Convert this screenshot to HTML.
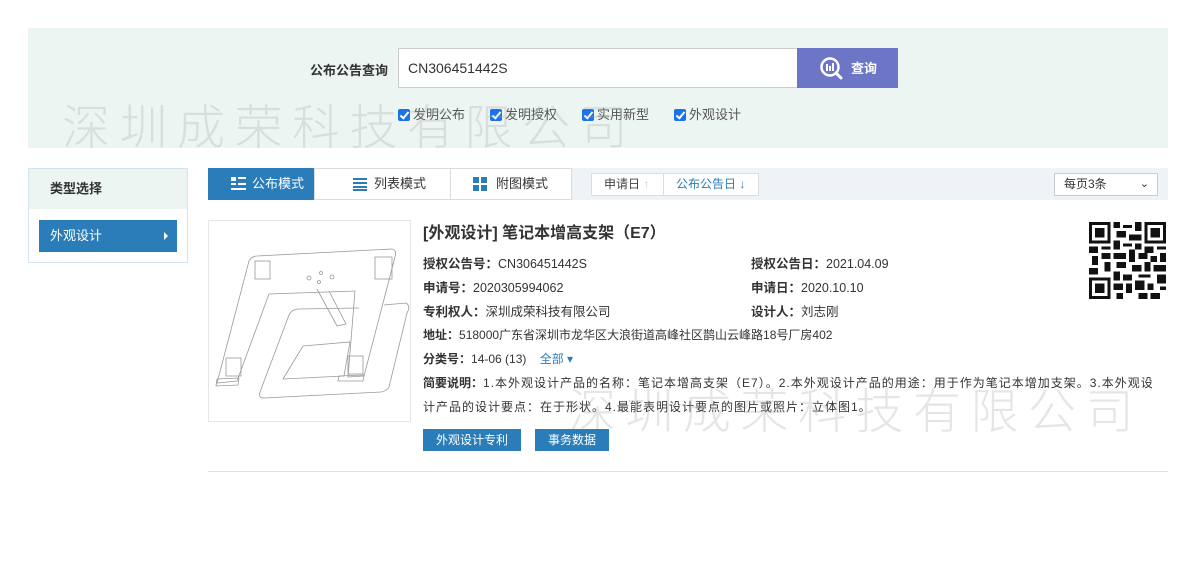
<!DOCTYPE html>
<html><head><meta charset="utf-8"><style>
*{margin:0;padding:0;box-sizing:border-box}
body{width:1198px;height:563px;background:#fff;font-family:"Liberation Sans","Noto Sans CJK SC",sans-serif;font-size:12px;color:#333;position:relative;overflow:hidden}
.abs{position:absolute}
.top{left:28px;top:28px;width:1140px;height:120px;background:#edf5f3}
.wm{font-size:48px;color:rgba(170,170,170,.3);white-space:nowrap;letter-spacing:9.5px;font-family:"Noto Sans CJK SC",sans-serif;font-weight:300}
.cb{display:inline-block;width:12px;height:12px;background:#1a73e8;border-radius:2px;vertical-align:-2px;margin-right:3px;position:relative}
.cb:after{content:"";position:absolute;left:4px;top:1px;width:3px;height:7px;border:solid #fff;border-width:0 2px 2px 0;transform:rotate(40deg)}
.chk{font-size:13px;color:#555;display:inline-block;width:92px}
.row{position:absolute;font-size:12.5px;color:#333;white-space:nowrap}
.row b{font-weight:bold}
.btn{position:absolute;background:#2a7db8;color:#fff;font-size:12px;text-align:center;line-height:22px;height:22px}
</style></head><body>
<div class="abs top"></div>
<div class="abs" style="left:300px;top:60px;width:88px;text-align:right;font-size:13px;font-weight:bold;color:#333">公布公告查询</div>
<div class="abs" style="left:398px;top:48px;width:400px;height:40px;background:#fff;border:1px solid #ccc;font-size:14px;line-height:38px;padding-left:9px;color:#333">CN306451442S</div>
<div class="abs" style="left:797px;top:48px;width:101px;height:40px;background:#6d75c6;color:#fff;font-size:13px;font-weight:bold;line-height:40px">
<svg class="abs" style="left:22px;top:8px" width="26" height="26" viewBox="0 0 26 26"><circle cx="11" cy="11" r="8.5" fill="none" stroke="#fff" stroke-width="2.5"/><path d="M17 17l5 5" stroke="#fff" stroke-width="3" stroke-linecap="round"/><path d="M8 8v7M11 10v5M14 7v8" stroke="#fff" stroke-width="2"/></svg>
<span class="abs" style="left:54px;top:1px">查询</span></div>
<div class="abs" style="left:398px;top:104px;white-space:nowrap"><span class="chk"><i class="cb"></i>发明公布</span><span class="chk"><i class="cb"></i>发明授权</span><span class="chk"><i class="cb"></i>实用新型</span><span class="chk"><i class="cb"></i>外观设计</span></div>
<div class="abs wm" style="left:62px;top:88px">深圳成荣科技有限公司</div>

<div class="abs" style="left:28px;top:168px;width:160px;height:95px;border:1px solid #d4e4ee;background:#fff"></div>
<div class="abs" style="left:29px;top:169px;width:158px;height:40px;background:#edf5f3;font-size:13px;font-weight:bold;line-height:40px;padding-left:21px;color:#333">类型选择</div>
<div class="abs" style="left:39px;top:220px;width:138px;height:32px;background:#2a7db8;color:#fff;font-size:13px;line-height:32px;padding-left:11px">外观设计<span class="abs" style="right:9px;top:12px;border-left:4px solid #fff;border-top:4px solid transparent;border-bottom:4px solid transparent"></span></div>

<div class="abs" style="left:208px;top:168px;width:960px;height:32px;background:#eef3f8"></div>
<div class="abs" style="left:208px;top:168px;width:106px;height:32px;background:#2a7db8;color:#fff;font-size:13px;line-height:32px;padding-left:44px">公布模式
<svg class="abs" style="left:23px;top:9px" width="15" height="14"><rect x="0" y="0" width="5" height="4" fill="#fff"/><rect x="7" y="0" width="8" height="2" fill="#fff"/><rect x="0" y="6" width="5" height="2" fill="#fff"/><rect x="7" y="6" width="8" height="2" fill="#fff"/><rect x="0" y="11" width="15" height="2" fill="#fff"/></svg></div>
<div class="abs" style="left:314px;top:168px;width:137px;height:32px;background:#fff;border:1px solid #dcdcdc;font-size:13px;line-height:30px;padding-left:59px;color:#333">列表模式
<svg class="abs" style="left:38px;top:9px" width="14" height="13"><rect y="0" width="14" height="2" fill="#2a7db8"/><rect y="4" width="14" height="2" fill="#2a7db8"/><rect y="8" width="14" height="2" fill="#2a7db8"/><rect y="11" width="14" height="2" fill="#2a7db8"/></svg></div>
<div class="abs" style="left:450px;top:168px;width:122px;height:32px;background:#fff;border:1px solid #dcdcdc;font-size:13px;line-height:30px;padding-left:45px;color:#333">附图模式
<svg class="abs" style="left:22px;top:8px" width="14" height="14"><rect width="6" height="6" fill="#2a7db8"/><rect x="8" width="6" height="6" fill="#2a7db8"/><rect y="8" width="6" height="6" fill="#2a7db8"/><rect x="8" y="8" width="6" height="6" fill="#2a7db8"/></svg></div>
<div class="abs" style="left:591px;top:173px;width:73px;height:23px;background:#fff;border:1px solid #ddd;font-size:12px;line-height:21px;padding-left:12px;color:#444">申请日 <span style="color:#ccc;font-weight:bold">↑</span></div>
<div class="abs" style="left:663px;top:173px;width:96px;height:23px;background:#fff;border:1px solid #ddd;font-size:12px;line-height:21px;padding-left:12px;color:#2a7db8">公布公告日 <span style="font-weight:bold">↓</span></div>
<div class="abs" style="left:1054px;top:173px;width:104px;height:23px;background:#fff;border:1px solid #ccc;font-size:12px;line-height:21px;padding-left:9px;color:#333">每页3条<span class="abs" style="right:8px;top:0;font-size:11px">&#8964;</span></div>

<div class="abs" style="left:208px;top:220px;width:203px;height:202px;border:1px solid #e6e6e6;background:#fff">
<svg width="201" height="200" viewBox="0 0 201 200" fill="none" stroke="#999" stroke-width="0.8">
<path d="M48 35L183 28Q188 29 186 36L155 155L139 156L146 70L60 73L28 160L8 162L40 40Q43 35 48 35Z"/>
<path d="M175 84L197 82Q202 85 198 92L180 166Q178 170 172 171L55 177Q49 177 51 171L80 94Q83 88 90 88L150 87"/>
<path d="M94 125L141 121L135 155L74 158Z"/>
<path d="M108 68L128 105L137 103L120 70"/>
<rect x="46" y="40" width="15" height="18"/><rect x="166" y="36" width="17" height="22"/>
<path d="M8 158L30 157L29 164L7 165Z"/><path d="M130 155L155 154L154 160L129 160Z"/>
<rect x="17" y="137" width="15" height="18"/><rect x="139" y="135" width="15" height="18"/>
<circle cx="100" cy="57" r="2"/><circle cx="112" cy="52" r="1.5"/><circle cx="123" cy="56" r="2"/><circle cx="110" cy="61" r="1.5"/>
</svg></div>

<div class="abs" style="left:423px;top:219px;font-size:16px;font-weight:bold;color:#333">[外观设计] 笔记本增高支架（E7）</div>
<div class="row" style="left:423px;top:253px"><b>授权公告号：</b>CN306451442S</div>
<div class="row" style="left:751px;top:253px"><b>授权公告日：</b>2021.04.09</div>
<div class="row" style="left:423px;top:277px"><b>申请号：</b>2020305994062</div>
<div class="row" style="left:751px;top:277px"><b>申请日：</b>2020.10.10</div>
<div class="row" style="left:423px;top:301px"><b>专利权人：</b>深圳成荣科技有限公司</div>
<div class="row" style="left:751px;top:301px"><b>设计人：</b>刘志刚</div>
<div class="row" style="left:423px;top:326px;font-size:12px"><b>地址：</b>518000广东省深圳市龙华区大浪街道高峰社区鹊山云峰路18号厂房402</div>
<div class="row" style="left:423px;top:350px;font-size:12px"><b>分类号：</b>14-06 (13) &nbsp;&nbsp;&nbsp;<span style="color:#2a7db8">全部 ▾</span></div>
<div class="row" style="left:423px;top:374px;font-size:12px;letter-spacing:1px"><b style="letter-spacing:0">简要说明：</b>1.本外观设计产品的名称：笔记本增高支架（E7）。2.本外观设计产品的用途：用于作为笔记本增加支架。3.本外观设</div>
<div class="row" style="left:423px;top:398px;font-size:12px;letter-spacing:1px">计产品的设计要点：在于形状。4.最能表明设计要点的图片或照片：立体图1。</div>
<div class="abs wm" style="left:568px;top:372px">深圳成荣科技有限公司</div>
<div class="btn" style="left:423px;top:429px;width:98px">外观设计专利</div>
<div class="btn" style="left:535px;top:429px;width:74px">事务数据</div>
<div class="abs" style="left:208px;top:471px;width:960px;height:1px;background:#d8e4ec"></div>

<svg class="abs" style="left:1089px;top:222px" width="77" height="77" viewBox="0 0 25 25" shape-rendering="crispEdges">
<rect width="25" height="25" fill="#fff"/>
<g fill="#111">
<path d="M0 0h7v7h-7zM1 1v5h5v-5zM2 2h3v3h-3z" fill-rule="evenodd"/>
<path d="M18 0h7v7h-7zM19 1v5h5v-5zM20 2h3v3h-3z" fill-rule="evenodd"/>
<path d="M0 18h7v7h-7zM1 19v5h5v-5zM2 20h3v3h-3z" fill-rule="evenodd"/>
<path d="M8 0h2v2h-2zM11 1h3v1h-3zM15 0h2v3h-2zM9 3h3v2h-3zM13 4h4v2h-4zM8 6h2v3h-2zM11 7h3v1h-3zM15 7h2v2h-2zM0 8h3v2h-3zM4 8h3v1h-3zM18 8h3v2h-3zM22 8h3v1h-3zM1 11h2v3h-2zM4 10h3v2h-3zM8 10h4v2h-4zM13 9h2v4h-2zM16 10h3v2h-3zM20 11h2v2h-2zM23 10h2v3h-2zM0 15h3v2h-3zM5 13h2v3h-2zM9 13h3v2h-3zM14 14h3v2h-3zM18 13h2v3h-2zM21 14h4v2h-4zM8 16h2v3h-2zM11 17h3v2h-3zM16 17h4v1h-4zM22 17h3v3h-3zM8 20h3v2h-3zM12 20h2v3h-2zM15 19h3v3h-3zM19 20h2v2h-2zM9 23h2v2h-2zM16 23h3v2h-3zM20 23h3v2h-3zM23 21h2v1h-2z"/>
</g></svg>
</body></html>
